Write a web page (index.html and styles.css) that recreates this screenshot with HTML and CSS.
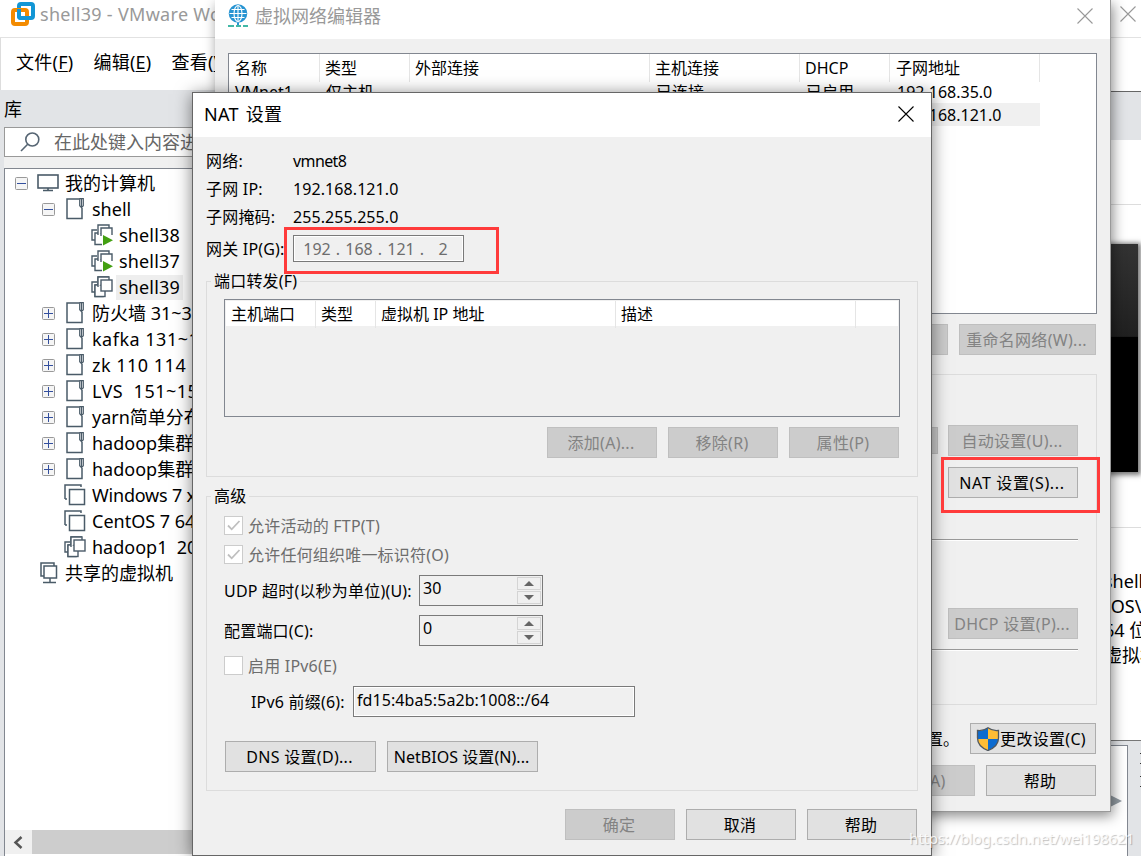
FILE: index.html
```html
<!DOCTYPE html>
<html lang="zh-CN">
<head>
  <meta charset="utf-8">
  <meta name="viewport" content="width=device-width,initial-scale=1">
  <title>shell39 - VMware Workstation</title>
  <link rel="stylesheet" href="styles.css">
</head>
<body>
  <!-- shared icons -->
  <svg class="defs" aria-hidden="true">
    <symbol id="close" viewBox="0 0 16 16"><path d="M.5.5l15 15M15.5.5l-15 15" fill="none" stroke="currentColor" stroke-width="1.1"/></symbol>
    <symbol id="minus" viewBox="0 0 13 13"><rect x=".5" y=".5" width="12" height="12" rx="1" fill="#f5f5f5" stroke="#999"/><path d="M2 6.500h9" stroke="#334f9e"/></symbol>
    <symbol id="plus" viewBox="0 0 13 13"><rect x=".5" y=".5" width="12" height="12" rx="1" fill="#f5f5f5" stroke="#999"/><path d="M2 6.500h9M6.500 2v9" stroke="#334f9e"/></symbol>
    <symbol id="folder" viewBox="0 0 18 22"><path d="M13 1H1v19.500h15V10" fill="none" stroke="#4a5b68" stroke-width="1.5"/><path d="M13.700 .7h3.600v7l-1.800 2-1.800-2zM15.500 1v8" fill="#fff" stroke="#4a5b68" stroke-width="1.200"/></symbol>
    <symbol id="vm" viewBox="0 0 22 22"><path d="M1 15V1h16v2" fill="none" stroke="#4a5b68" stroke-width="1.500"/><path d="M1 15h2" stroke="#4a5b68" stroke-width="1.500"/><rect x="5.500" y="5.500" width="15" height="15" fill="#fff" stroke="#4a5b68" stroke-width="1.500"/></symbol>
    <symbol id="group" viewBox="0 0 22 22"><g fill="#fff" stroke="#4a5b68" stroke-width="1.400"><path d="M4 16H1V6h5M4 9h8v11.500H4zM7 8V1h11v3"/><rect x="4" y="9" width="10" height="11.500"/><path d="M7 11V1h11"/><rect x="10" y="4" width="11" height="11"/></g></symbol>
    <symbol id="running" viewBox="0 0 22 22"><g fill="#fff" stroke="#4a5b68" stroke-width="1.400"><path d="M4 16H1V6h5"/><path d="M11 20.500H4V9h6"/><path d="M7 11V1h11v3"/><path d="M10 12V4h11v7"/></g><path d="M12 11l10 5.200-10 5.200z" fill="#43a012"/></symbol>
  </svg>

  <div class="desktop">
    <div class="main-window">
      <header class="titlebar main-title">
        <svg class="logo" width="24" height="24" viewBox="0 0 24 24" fill="none" stroke-width="4">
          <rect x="8" y="2" width="14" height="14" rx="2" stroke="#1296d5"/>
          <rect x="2" y="8" width="14" height="14" rx="2" stroke="#f38b00"/>
          <path d="M8 7v7q0 2 2 2h8" stroke="#1296d5"/>
        </svg>
        <span>shell39 - VMware Workstation</span>
        <svg class="close-icon" width="16" height="16"><use href="#close"/></svg>
      </header>
      <nav class="menubar">
        <span>文件(<u>F</u>)</span>
        <span>编辑(<u>E</u>)</span>
        <span>查看(<u>V</u>)</span>
      </nav>
      <div class="workspace">
        <aside class="library">
          <div class="library-title">库</div>
          <div class="search">
            <svg width="20" height="20" viewBox="0 0 20 20" fill="none" stroke="#566573" stroke-width="1.600"><circle cx="12.300" cy="7.500" r="6.500"/><path d="M7.700 12.200L1 19"/></svg>
            <span>在此处键入内容进行搜索</span>
          </div>
          <div class="tree">
            <div class="node"><svg class="toggle" width="13" height="13"><use href="#minus"/></svg><svg class="pc" width="22" height="18" viewBox="0 0 22 18" fill="none" stroke="#4a5b68" stroke-width="1.600"><rect x="1" y="1" width="20" height="13"/><path d="M11 14v3M6 16.500h10"/></svg>我的计算机</div>
            <div class="node child"><svg class="toggle" width="13" height="13"><use href="#minus"/></svg><svg class="folder" width="18" height="22"><use href="#folder"/></svg>shell</div>
            <div class="node leaf"><svg width="22" height="22"><use href="#running"/></svg><span>shell38</span></div>
            <div class="node leaf"><svg width="22" height="22"><use href="#running"/></svg><span>shell37</span></div>
            <div class="node leaf"><svg width="22" height="22"><use href="#group"/></svg><span class="current">shell39</span></div>
            <div class="node child"><svg class="toggle" width="13" height="13"><use href="#plus"/></svg><svg class="folder" width="18" height="22"><use href="#folder"/></svg>防火墙 31~33</div>
            <div class="node child spaced"><svg class="toggle" width="13" height="13"><use href="#plus"/></svg><svg class="folder" width="18" height="22"><use href="#folder"/></svg>kafka 131~133</div>
            <div class="node child spaced"><svg class="toggle" width="13" height="13"><use href="#plus"/></svg><svg class="folder" width="18" height="22"><use href="#folder"/></svg>zk 110 114</div>
            <div class="node child spaced"><svg class="toggle" width="13" height="13"><use href="#plus"/></svg><svg class="folder" width="18" height="22"><use href="#folder"/></svg>LVS&nbsp; 151~155</div>
            <div class="node child"><svg class="toggle" width="13" height="13"><use href="#plus"/></svg><svg class="folder" width="18" height="22"><use href="#folder"/></svg>yarn简单分布式</div>
            <div class="node child"><svg class="toggle" width="13" height="13"><use href="#plus"/></svg><svg class="folder" width="18" height="22"><use href="#folder"/></svg>hadoop集群</div>
            <div class="node child"><svg class="toggle" width="13" height="13"><use href="#plus"/></svg><svg class="folder" width="18" height="22"><use href="#folder"/></svg>hadoop集群</div>
            <div class="node machine tight"><svg width="22" height="22"><use href="#vm"/></svg>Windows 7 x64</div>
            <div class="node machine"><svg width="22" height="22"><use href="#vm"/></svg>CentOS 7 64 位</div>
            <div class="node machine"><svg width="22" height="22"><use href="#group"/></svg>hadoop1&nbsp; 201</div>
            <div class="node shared"><svg width="18" height="22" viewBox="0 0 18 22" fill="none" stroke="#4a5b68" stroke-width="1.500"><path d="M4 14H1V1h13v3"/><rect x="4" y="4" width="12.500" height="12"/><path d="M10 16v4.500M3 20.500h13"/></svg>共享的虚拟机</div>
            <div class="scrollbar">
              <svg width="27" height="24" viewBox="0 0 27 24"><path d="M16.500 7l-6 5.500 6 5.500" fill="none" stroke="#555" stroke-width="2.500"/></svg>
              <div class="thumb"></div>
            </div>
          </div>
        </aside>
        <section class="details">
          <div class="tabs"></div>
          <div class="toolbar"></div>
          <div class="preview"><div class="screen"></div></div>
          <div class="info">
            <p>shell39</p>
            <p>\OS\VM</p>
            <p>64 位</p>
            <p>虚拟机</p>
          </div>
          <div class="bottom-panel">
            <div class="panel-box"><i class="arrow"></i></div>
            <div class="panel-side"><i></i><i></i></div>
          </div>
        </section>
      </div>
    </div>

    <div class="window editor">
      <header class="titlebar editor-title">
        <svg width="20" height="24" viewBox="0 0 20 24"><circle cx="10" cy="9.500" r="9.300" fill="#2794d2"/><g fill="none" stroke="#fff" stroke-width="1.100"><ellipse cx="10" cy="9.500" rx="4" ry="8"/><path d="M10 1.500v16M1.500 9.500h17M3.500 5.500h13M3.500 13.500h13"/></g><path d="M10 18.500v3" stroke="#2794d2" stroke-width="2"/><path d="M0 22h6M8 22h5M15 22h5" stroke="#42b8a6" stroke-width="2"/></svg>
        <span>虚拟网络编辑器</span>
        <svg class="close-icon" width="16" height="16"><use href="#close"/></svg>
      </header>
      <div class="editor-list">
        <div class="net-row net-head"><span>名称</span><span>类型</span><span>外部连接</span><span>主机连接</span><span>DHCP</span><span>子网地址</span></div>
        <div class="net-row"><span>VMnet1</span><span>仅主机...</span><span>-</span><span>已连接</span><span>已启用</span><span>192.168.35.0</span></div>
        <div class="net-row selected"><span>VMnet8</span><span>NAT 模式</span><span>NAT 模式</span><span>已连接</span><span>已启用</span><span>192.168.121.0</span></div>
      </div>
      <div class="editor-actions">
        <div class="btn off"></div>
        <div class="btn off rename">重命名网络(W)...</div>
      </div>
      <div class="vmnet-info">
        <div class="info-line"><div class="btn off short"></div><div class="btn off">自动设置(U)...</div></div>
        <div class="info-line nat-line"><div class="btn">NAT 设置(S)...</div></div>
        <div class="rule"></div>
        <div class="info-line dhcp-line"><div class="btn off">DHCP 设置(P)...</div></div>
        <div class="rule last"></div>
      </div>
      <div class="editor-foot admin">
        <span>需要具备管理员特权才能修改网络设置。</span>
        <div class="btn change"><svg width="24" height="24" viewBox="0 0 24 24"><path d="M12 .8C9 3 5 4 1.500 3.500V11c0 6 4 10 10.500 12.500C18.500 21 22.500 17 22.500 11V3.500C19 4 15 3 12 .8z" fill="#ffbd35"/><path d="M12 .8C9 3 5 4 1.500 3.500V12H12zM12 12h10.500C22 17 18.500 21 12 23.500z" fill="#0c6bd0"/><path d="M12 .8C9 3 5 4 1.500 3.500V11c0 6 4 10 10.500 12.500C18.500 21 22.500 17 22.500 11V3.500C19 4 15 3 12 .8z" fill="none" stroke="#505860" stroke-width="1.300"/></svg>更改设置(C)</div>
      </div>
      <div class="editor-foot">
        <div class="btn off">应用(A)</div>
        <div class="btn">帮助</div>
      </div>
    </div>

    <div class="window dialog">
      <header class="titlebar dialog-title">
        <span>NAT 设置</span>
        <svg class="close-icon" width="16" height="16"><use href="#close"/></svg>
      </header>
      <div class="dialog-body">
        <dl class="summary">
          <dt>网络:</dt><dd class="name">vmnet8</dd>
          <dt>子网 IP:</dt><dd>192.168.121.0</dd>
          <dt>子网掩码:</dt><dd>255.255.255.0</dd>
        </dl>
        <div class="gateway">
          <label>网关 IP(G):</label>
          <div class="ip-field"><span>192</span><i>.</i><span>168</span><i>.</i><span>121</span><i>.</i><span>2</span></div>
        </div>
        <fieldset class="forwarding">
          <legend>端口转发(F)</legend>
          <div class="port-list">
            <div class="port-head"><span>主机端口</span><span>类型</span><span>虚拟机 IP 地址</span><span>描述</span></div>
          </div>
          <div class="port-actions">
            <div class="btn off">添加(A)...</div>
            <div class="btn off">移除(R)</div>
            <div class="btn off">属性(P)</div>
          </div>
        </fieldset>
        <fieldset class="advanced">
          <legend>高级</legend>
          <div class="check"><svg width="19" height="19" viewBox="0 0 19 19"><rect x=".5" y=".5" width="18" height="18" fill="#fff" stroke="#ccc"/><path d="M4 9.500l3.700 3.800L15.500 5" fill="none" stroke="#bfbfbf" stroke-width="1.800"/></svg>允许活动的 FTP(T)</div>
          <div class="check"><svg width="19" height="19" viewBox="0 0 19 19"><rect x=".5" y=".5" width="18" height="18" fill="#fff" stroke="#ccc"/><path d="M4 9.500l3.700 3.800L15.500 5" fill="none" stroke="#bfbfbf" stroke-width="1.800"/></svg>允许任何组织唯一标识符(O)</div>
          <div class="field first"><label>UDP 超时(以秒为单位)(U):</label><div class="spinner"><span>30</span><div class="steps"><b class="up"></b><b class="down"></b></div></div></div>
          <div class="field"><label>配置端口(C):</label><div class="spinner"><span>0</span><div class="steps"><b class="up"></b><b class="down"></b></div></div></div>
          <div class="check ipv6"><svg width="19" height="19" viewBox="0 0 19 19"><rect x=".5" y=".5" width="18" height="18" fill="#fff" stroke="#ccc"/></svg>启用 IPv6(E)</div>
          <div class="field prefix"><label>IPv6 前缀(6):</label><div class="text-field">fd15:4ba5:5a2b:1008::/64</div></div>
          <div class="more">
            <div class="btn">DNS 设置(D)...</div>
            <div class="btn netbios">NetBIOS 设置(N)...</div>
          </div>
        </fieldset>
        <div class="dialog-actions">
          <div class="btn off">确定</div>
          <div class="btn">取消</div>
          <div class="btn">帮助</div>
        </div>
      </div>
    </div>

    <div class="mark mark-gateway"></div>
    <div class="mark mark-nat"></div>
    <div class="watermark">https://blog.csdn.net/wei198621</div>
  </div>
</body>
</html>
```
FILE: styles.css
```css
:root {
  --face: #f0f0f0;
  --line: #dcdcdc;
  --list-border: #828790;
  --chrome: #e2e4e7;
  --muted: #838383;
}
* {
  box-sizing: border-box;
  margin: 0;
  padding: 0;
}
body {
  font-family: "Noto Sans", "Noto Sans CJK SC", sans-serif;
  font-size: 16px;
  line-height: 24px;
  color: #000;
  overflow: hidden;
}
svg { display: block; flex: none; }
i { font-style: normal; }
.defs { position: absolute; width: 0; height: 0; }
.desktop {
  position: relative;
  width: 1141px;
  height: 856px;
  overflow: hidden;
  white-space: nowrap;
}

/* main window */
.main-window {
  height: 856px;
  display: flex;
  flex-direction: column;
  background: #fff;
  font-size: 18px;
}
.titlebar { display: flex; align-items: center; background: #fff; flex: none; }
.close-icon { margin-left: auto; }
.main-title {
  height: 38px;
  padding: 0 5px 9px 11px;
  gap: 5px;
  color: #999;
  letter-spacing: .3px;
  border-bottom: 1px solid #e2e2e2;
}
.menubar {
  height: 52px;
  display: flex;
  align-items: center;
  gap: 20px;
  padding: 0 0 5px 15px;
  letter-spacing: .25px;
  border-left: 1px solid #ddd;
  flex: none;
}
.menubar u { text-underline-offset: 2px; text-decoration-thickness: 1px; }
.workspace { display: flex; justify-content: space-between; flex: 1; }
.library { width: 240px; background: var(--chrome); padding-left: 4px; }
.library-title { height: 37px; line-height: 39px; }
.search {
  height: 30px;
  display: flex;
  align-items: center;
  gap: 14px;
  padding-left: 15px;
  background: #fff;
  border: 1px solid #999;
  color: #666;
  overflow: hidden;
}
.tree {
  height: 688px;
  margin-top: 11px;
  padding-top: 1px;
  display: flex;
  flex-direction: column;
  background: #fff;
  border: 1px solid var(--list-border);
  border-bottom: 0;
  box-shadow: 0 -11px 0 var(--face);
}
.node { height: 26px; display: flex; align-items: center; padding-left: 10px; flex: none; }
.pc { margin: 0 6px 0 9px; }
.child { padding-left: 37px; }
.folder { margin: 0 8px 0 11px; }
.spaced { letter-spacing: .5px; }
.tight { letter-spacing: -.2px; }
.leaf { padding-left: 86px; }
.leaf span { height: 25px; padding: 0 3px; margin-left: 3px; letter-spacing: .15px; }
.leaf .current { background: #eee; }
.machine { padding-left: 59px; gap: 6px; }
.shared { padding-left: 35px; gap: 7px; }
.scrollbar { margin-top: auto; margin-bottom: 2px; height: 24px; display: flex; background: var(--face); }
.thumb { flex: 1; background: #cdcdcd; }

.details { width: 240px; display: flex; flex-direction: column; }
.tabs { height: 49px; margin-top: 1px; border-top: 1px solid #666; background: var(--chrome); }
.toolbar { height: 65px; border-bottom: 1px solid #ddd; }
.preview { height: 323px; padding: 39px 3px 0 0; border-bottom: 1px solid #ddd; }
.screen {
  height: 228px;
  background: linear-gradient(#333, #202020 40.500%, #000 41%);
  box-shadow: 1px 1px 5px 2px #777;
}
.info { height: 212px; padding: 41px 0 0 203px; line-height: 24.500px; }
.bottom-panel { flex: 1; display: flex; border-top: 1px solid #777; background: var(--chrome); }
.panel-box {
  width: 227px;
  margin-top: 4px;
  padding: 49px 0 0 209px;
  background: #fff;
  border-top: 1px solid var(--list-border);
  border-right: 1px solid var(--list-border);
}
.arrow { display: block; width: 0; border: 6px solid transparent; border-left: 12px solid #929ba2; }
.panel-side { width: 13px; padding: 12px 0 0 12px; }
.panel-side i { display: block; height: 11px; margin-bottom: 12px; border-top: 1px solid #333; border-bottom: 1px solid #333; }

/* windows on top */
.window { position: absolute; background: var(--face); display: flex; flex-direction: column; }
.btn {
  height: 31px;
  display: flex;
  align-items: center;
  justify-content: center;
  background: #e1e1e1;
  border: 1px solid #adadad;
  padding: 1px 2px 0 0;
  letter-spacing: .3px;
  flex: none;
}
.btn.off { background: #ccc; border-color: #bfbfbf; color: var(--muted); }

.editor {
  left: 215px;
  top: 0;
  width: 896px;
  height: 812px;
  border-right: 1px solid #999;
  border-bottom: 1px solid #999;
  box-shadow: 2px 4px 12px rgba(0, 0, 0, .45);
}
.editor-title {
  height: 39px;
  padding: 0 17px 7px 13px;
  gap: 7px;
  font-size: 18px;
  color: #999;
}
.editor-list {
  width: 869px;
  height: 261px;
  margin: 14px 0 0 13px;
  background: #fff;
  border: 1px solid var(--list-border);
}
.net-row {
  width: 811px;
  height: 23px;
  display: grid;
  grid-template-columns: 91px 90px 240px 150px 90px 150px;
  line-height: 24px;
}
.net-row span { padding-left: 6px; }
.net-row span:last-child { padding-left: 7px; }
.net-head { height: 26px; line-height: 28px; }
.net-head span { border-right: 1px solid #e5e5e5; padding-left: 5px; }
.net-head span:first-child, .net-head span:last-child { padding-left: 6px; }
.selected { background: var(--face); }
.editor-actions { display: flex; justify-content: flex-end; gap: 11px; padding: 10px 14px 0 0; }
.editor-actions .btn { width: 137px; }
.vmnet-info {
  width: 869px;
  height: 331px;
  margin: 19px 0 0 13px;
  padding: 50px 18px 0 0;
  border: 1px solid var(--line);
}
.info-line { display: flex; justify-content: flex-end; gap: 10px; }
.info-line .btn { width: 130px; }
.info-line .short { height: 27px; margin-top: 2px; }
.nat-line { margin-top: 11px; }
.nat-line .btn { letter-spacing: .65px; }
.rule { margin-top: 41px; height: 2px; border-top: 1px solid #999; border-bottom: 1px solid #fff; }
.dhcp-line { margin-top: 67px; }
.rule.last { margin-top: 10px; }
.editor-foot { display: flex; align-items: center; justify-content: flex-end; gap: 11px; padding-right: 14px; margin-top: 11px; }
.editor-foot .btn { width: 110px; }
.editor-foot.admin { margin-top: 18px; }
.editor-foot .change { width: 126px; padding-right: 4px; }

/* NAT settings */
.dialog {
  left: 192px;
  top: 92px;
  width: 740px;
  height: 764px;
  border: 1px solid #666;
  box-shadow: 0 2px 16px rgba(0, 0, 0, .5);
}
.dialog-title { height: 44px; padding: 0 17px 2px 11px; font-size: 18px; word-spacing: 2px; letter-spacing: .3px; }
.dialog-body { padding: 10px 13px 0; }
.summary { display: grid; grid-template-columns: 87px 1fr; grid-auto-rows: 28px; line-height: 28px; }
.summary dt, .gateway label, .check, .field label { letter-spacing: .2px; }
.summary dd { letter-spacing: .08px; }
.summary .name { letter-spacing: -.6px; }
.gateway { height: 36px; display: flex; align-items: center; }
.gateway label { width: 87px; }
.ip-field {
  width: 171px;
  height: 27px;
  margin-top: -1px;
  padding-left: 8px;
  display: flex;
  align-items: center;
  border: 1px solid #7a7a7a;
  box-shadow: inset 0 0 0 1px #fff;
  color: #6d6d6d;
}
.ip-field span { width: 30px; text-align: center; }
.ip-field i { width: 12px; text-align: center; }
fieldset { border: 1px solid var(--line); width: 712px; }
legend { height: 24px; padding: 0 3px; margin-left: -13px; letter-spacing: .2px; }
.forwarding { height: 208px; margin-top: 2px; padding: 6px 16px 0 17px; }
.port-list { width: 676px; height: 118px; border: 1px solid var(--list-border); padding: 1px; }
.port-head { height: 25px; line-height: 27px; display: grid; grid-template-columns: 90px 60px 240px 240px; background: #fff; }
.port-head span { border-right: 1px solid #e5e5e5; padding-left: 5px; }
.port-actions { display: flex; justify-content: flex-end; gap: 11px; padding: 10px 2px 0 0; }
.port-actions .btn { width: 110px; }
.advanced { height: 307px; margin-top: 7px; padding: 8px 17px 0; }
.check { display: flex; align-items: center; gap: 5px; height: 19px; margin-bottom: 10px; color: #6d6d6d; }
.field { display: flex; align-items: center; height: 31px; margin-bottom: 9px; }
.field.first { margin-top: 11px; }
.field + .check { margin-top: 10px; margin-bottom: 11px; }
.field label { width: 195px; padding-top: 1px; }
.spinner { width: 124px; height: 31px; display: flex; justify-content: space-between; border: 1px solid #7a7a7a; padding-left: 3px; }
.spinner span { line-height: 25px; }
.steps { width: 26px; display: flex; flex-direction: column; gap: 1px; padding: 1px; }
.steps b { flex: 1; display: flex; align-items: center; justify-content: center; border: 1px solid #d4d4d4; }
.steps b::before { content: ""; border: 5px solid transparent; }
.steps .up::before { border-top: 0; border-bottom-color: #666; }
.steps .down::before { border-bottom: 0; border-top-color: #666; }
.prefix { padding-left: 27px; margin-bottom: 24px; }
.field.prefix label { width: 102px; }
.text-field { width: 282px; height: 31px; line-height: 26px; padding-left: 3px; letter-spacing: .08px; border: 1px solid #7a7a7a; box-shadow: inset 0 0 0 1px #fff; }
.more { display: flex; gap: 11px; padding-left: 1px; }
.more .btn { width: 151px; }
.more .netbios { letter-spacing: .05px; }
.dialog-actions { display: flex; justify-content: flex-end; gap: 11px; margin-top: 18px; padding-right: 1px; }
.dialog-actions .btn { width: 110px; }

/* red highlight frames */
.mark { position: absolute; border: 3px solid #ff3b3b; }
.mark-gateway { left: 284px; top: 227px; width: 215px; height: 47px; }
.mark-nat { left: 941px; top: 457px; width: 159px; height: 56px; }
.watermark {
  position: absolute;
  left: 909px;
  top: 826px;
  font-size: 15px;
  letter-spacing: -.1px;
  color: rgba(255, 255, 255, .85);
  text-shadow: 1px 1px 1px rgba(0, 0, 0, .25);
}
```
